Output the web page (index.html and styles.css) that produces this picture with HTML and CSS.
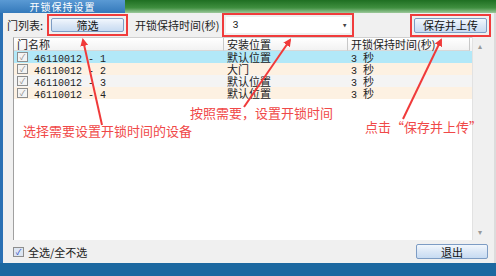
FILE: index.html
```html
<!DOCTYPE html>
<html lang="zh-CN">
<head>
    <meta charset="UTF-8">
    <title>开锁保持设置</title>
    <link rel="stylesheet" href="styles.css">
</head>
<body>
    <div class="window">
        <div class="titlebar">
            <div class="tab">开锁保持设置</div>
            <div class="titlefill"></div>
        </div>

        <div class="frame">
            <div class="toolbar">
                <span class="label">门列表:</span>
                <span class="mark mark-filter"><button class="btn btn-filter">筛选</button></span>
                <span class="label label-time">开锁保持时间(秒)</span>
                <span class="mark mark-combo">
                    <span class="combo"><span>3</span><span class="caret">▾</span></span>
                </span>
                <span class="mark mark-save"><button class="btn btn-save">保存并上传</button></span>
            </div>

            <div class="listarea">
                <div class="list">
                    <div class="head">
                        <div>门名称</div>
                        <div>安装位置</div>
                        <div>开锁保持时间(秒)</div>
                    </div>
                    <div class="row sel">
                        <div><span class="chk">✓</span><span class="num">46110012 - 1</span></div>
                        <div>默认位置</div>
                        <div><span class="num">3 </span>秒</div>
                    </div>
                    <div class="row alt">
                        <div><span class="chk">✓</span><span class="num">46110012 - 2</span></div>
                        <div>大门</div>
                        <div><span class="num">3 </span>秒</div>
                    </div>
                    <div class="row gray">
                        <div><span class="chk">✓</span><span class="num">46110012 - 3</span></div>
                        <div>默认位置</div>
                        <div><span class="num">3 </span>秒</div>
                    </div>
                    <div class="row alt">
                        <div><span class="chk">✓</span><span class="num">46110012 - 4</span></div>
                        <div>默认位置</div>
                        <div><span class="num">3 </span>秒</div>
                    </div>

                    <!-- annotations -->
                    <div class="note note-time">按照需要，设置开锁时间</div>
                    <div class="note note-select">选择需要设置开锁时间的设备</div>
                    <div class="note note-save">点击“保存并上传”</div>
                </div>
                <div class="scrollbar">
                    <span>▴</span>
                    <span>▾</span>
                </div>
            </div>

            <div class="footer">
                <label class="selall"><span class="chk chk-all">✓</span>全选/全不选</label>
                <button class="btn btn-exit">退出</button>
            </div>
        </div>

        <div class="bottombar"></div>

        <svg class="arrows" width="496" height="276" viewBox="0 0 496 276">
            <defs>
                <marker id="head" markerWidth="8" markerHeight="8" refX="6" refY="4" orient="auto" markerUnits="userSpaceOnUse">
                    <path d="M0,0 L8,4 L0,8 Z" fill="#f03a3a"/>
                </marker>
            </defs>
            <line x1="102" y1="125" x2="83" y2="40" marker-end="url(#head)"/>
            <line x1="244" y1="107" x2="290" y2="40" marker-end="url(#head)"/>
            <line x1="403" y1="119" x2="441" y2="40" marker-end="url(#head)"/>
        </svg>
    </div>
</body>
</html>
```

FILE: styles.css
```css
body {
    margin: 0;
    font-family: "Noto Sans CJK SC", "Liberation Sans", sans-serif;
    font-size: 11px;
    color: #222;
    background: #1c68a0;
}
.window {
    position: relative;
    width: 496px;
    height: 276px;
    display: flex;
    flex-direction: column;
    overflow: hidden;
}
.titlebar {
    height: 13px;
    display: flex;
}
.tab {
    width: 125px;
    background: linear-gradient(#5a9ad4, #3479bb);
    color: #fff;
    font-size: 10px;
    line-height: 13px;
    text-align: center;
    letter-spacing: 1px;
}
.titlefill {
    flex: 1;
    background: linear-gradient(#1f6f22, #3f8f3f 60%, #9cc99a);
}
.frame {
    flex: 1;
    display: flex;
    flex-direction: column;
    background: #f0f0f0;
    border-left: 3px solid #2a70b4;
    border-right: 2px solid #dcdcdc;
}
.toolbar {
    height: 24px;
    display: flex;
    align-items: center;
    padding: 0 7px 0 4px;
}
.label {
    line-height: 12px;
}
.label-time {
    margin-left: 11px;
}
.mark {
    position: relative;
    display: flex;
}
.mark::after {
    content: "";
    position: absolute;
    left: -4px;
    right: -4px;
    top: -4px;
    bottom: -4px;
    border: 2px solid #f03c3c;
}
.mark-filter {
    margin-left: 8px;
}
.mark-combo {
    margin-left: 6px;
}
.mark-save {
    margin-left: auto;
}
.btn {
    font-family: inherit;
    font-size: 11px;
    line-height: 12px;
    padding: 0;
    color: #111;
    border: 1px solid #7d9cc4;
    border-radius: 2px;
    background: linear-gradient(#f2f7fd, #dbe7f6 50%, #c7dbf2);
}
.btn-filter {
    width: 73px;
    height: 14px;
}
.btn-save {
    width: 73px;
    height: 15px;
}
.combo {
    width: 124px;
    height: 16px;
    box-sizing: border-box;
    background: #fff;
    display: flex;
    align-items: center;
    justify-content: space-between;
    padding: 0 2px 0 7px;
    font-family: "Liberation Mono", monospace;
    font-size: 10px;
}
.caret {
    font-size: 9px;
    color: #444;
}
.listarea {
    height: 203px;
    display: flex;
    margin: 0 7px 0 10px;
}
.list {
    position: relative;
    flex: 1;
    background: #fff;
    border-left: 1px solid #a0a0a0;
    border-top: 1px solid #d0d0d0;
}
.head,
.row {
    display: grid;
    grid-template-columns: 210px 124px 122px;
}
.head {
    height: 13px;
    line-height: 12px;
    background: linear-gradient(#fff, #f1f1f1);
}
.head div {
    padding-left: 3px;
    border-right: 1px solid #c8c8c8;
    border-bottom: 1px solid #d8d8d8;
    white-space: nowrap;
}
.row {
    height: 12px;
    line-height: 12px;
}
.row div {
    padding-left: 3px;
    white-space: nowrap;
}
.row.sel {
    background: #b2e8f8;
}
.row.alt {
    background: #fdf1e2;
}
.row.gray {
    background: #f4f4f4;
}
.num {
    font-family: "Liberation Mono", monospace;
    font-size: 10px;
    white-space: pre;
}
.chk {
    display: inline-block;
    vertical-align: top;
    margin-top: 1px;
    width: 9px;
    height: 8px;
    border: 1px solid #8d8d8d;
    background: #f4f4f4;
    color: #888;
    font-size: 8px;
    line-height: 8px;
    text-align: center;
    margin-right: 6px;
}
.note {
    position: absolute;
    color: #f04848;
    font-size: 13px;
    line-height: 16px;
    white-space: nowrap;
}
.note-time {
    left: 176px;
    top: 67px;
}
.note-select {
    left: 9px;
    top: 85px;
}
.note-save {
    left: 351px;
    top: 81px;
}
.scrollbar {
    width: 14px;
    background: #f0f0f0;
    border-left: 1px solid #e2e2e2;
    display: flex;
    flex-direction: column;
    justify-content: space-between;
    align-items: center;
    color: #999;
    font-size: 8px;
    padding: 3px 0;
}
.footer {
    height: 23px;
    display: flex;
    align-items: center;
    justify-content: space-between;
    padding: 0 6px 0 10px;
}
.selall {
    display: flex;
    align-items: center;
    line-height: 12px;
}
.chk-all {
    margin-top: 0;
    color: #2040c0;
    background: #dde6f2;
    margin-right: 4px;
}
.btn-exit {
    width: 72px;
    height: 15px;
}
.bottombar {
    height: 13px;
    background: #1c68a0;
}
.arrows {
    position: absolute;
    left: 0;
    top: 0;
    pointer-events: none;
}
.arrows line {
    stroke: #f03a3a;
    stroke-width: 2;
}
```
